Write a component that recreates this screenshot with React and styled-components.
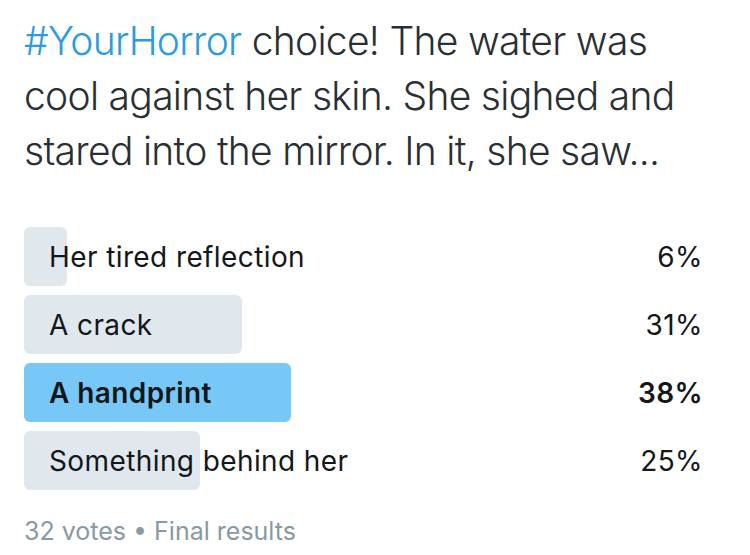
import React from 'react';
import styled, { createGlobalStyle } from 'styled-components';

const GlobalStyle = createGlobalStyle`
  html, body {
    margin: 0;
    padding: 0;
    background: #fff;
  }
  body {
    font-family: Inter, "Liberation Sans", Arial, sans-serif;
  }
`;

const Card = styled.div`
  width: 750px;
  height: 555px;
  padding: 13px 24px 0 24px;
  box-sizing: border-box;
  overflow: hidden;
`;

const Tweet = styled.p`
  margin: 0;
  font-size: 39px;
  line-height: 55px;
  font-weight: 300;
  letter-spacing: -0.7px;
  color: #292f33;
  white-space: nowrap;
`;

const Hashtag = styled.span`
  color: #2b9be2;
`;

const Poll = styled.div`
  margin-top: 49px;
  width: 700px;
  display: flex;
  flex-direction: column;
  gap: 9px;
`;

const Choice = styled.div`
  position: relative;
  height: 59px;
  display: flex;
  align-items: center;
  justify-content: space-between;
  padding: 0 21px 0 25px;
  font-size: 28px;
  letter-spacing: 0.4px;
  color: #14171a;
  font-weight: ${(p) => (p.$winner ? 600 : 400)};
`;

const Fill = styled.div`
  position: absolute;
  top: 0;
  left: 0;
  bottom: 0;
  border-radius: 6px;
  background: ${(p) => (p.$winner ? '#77c7f7' : '#e1e8ed')};
`;

const Label = styled.span`
  position: relative;
`;

const Percent = styled.span`
  position: relative;
`;

const Footer = styled.div`
  margin-top: 26px;
  font-size: 25px;
  color: #8899a6;
`;

const choices = [
  { label: 'Her tired reflection', pct: 6 },
  { label: 'A crack', pct: 31 },
  { label: 'A handprint', pct: 38, winner: true },
  { label: 'Something behind her', pct: 25 },
];

export default function App() {
  return (
    <>
      <GlobalStyle />
      <Card>
        <Tweet>
          <Hashtag>#YourHorror</Hashtag> choice! The water was
          <br />
          cool against her skin. She sighed and
          <br />
          stared into the mirror. In it, she saw...
        </Tweet>
        <Poll>
          {choices.map((c) => (
            <Choice key={c.label} $winner={c.winner}>
              <Fill $winner={c.winner} style={{ width: `${c.pct * 7 + 1}px` }} />
              <Label>{c.label}</Label>
              <Percent>{c.pct}%</Percent>
            </Choice>
          ))}
        </Poll>
        <Footer>32 votes • Final results</Footer>
      </Card>
    </>
  );
}
